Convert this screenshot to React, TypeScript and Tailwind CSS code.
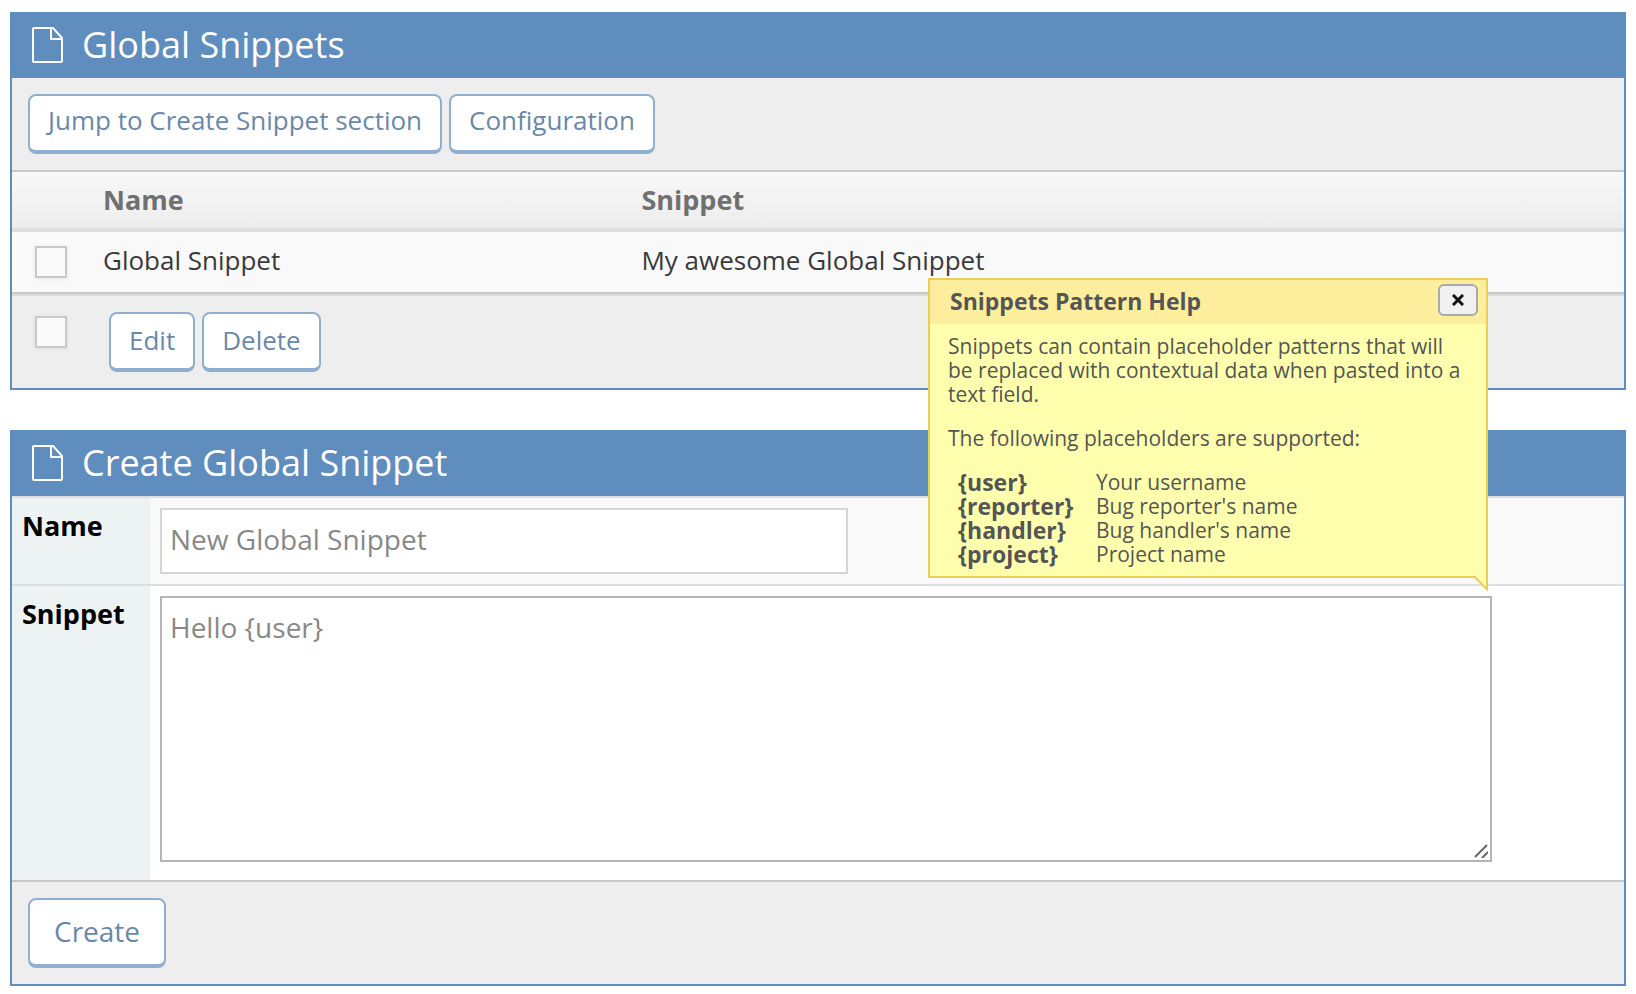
import { useState } from "react";
import type { ReactNode } from "react";

const snippets = [{ name: "Global Snippet", text: "My awesome Global Snippet" }];

const placeholders = [
  { pattern: "{user}", meaning: "Your username" },
  { pattern: "{reporter}", meaning: "Bug reporter's name" },
  { pattern: "{handler}", meaning: "Bug handler's name" },
  { pattern: "{project}", meaning: "Project name" },
];

const buttonBase =
  "rounded-lg border-2 border-b-4 border-[#8fafcf] bg-white text-[#6a88a8] whitespace-nowrap hover:bg-[#f4f8fb]";
const linkButton = `${buttonBase} block px-[18px] pt-2 pb-[14px] text-[26px] leading-8`;
const actionButton = `${buttonBase} block px-[18px] pt-[10px] pb-3 text-[26px] leading-8`;
const fieldLabel =
  "w-[138px] shrink-0 bg-[#edf3f3] px-[10px] pt-[10px] text-[27px] leading-9 font-bold text-black";

function FileIcon() {
  return (
    <svg width="32" height="38" viewBox="0 0 32 38" fill="none" stroke="currentColor" strokeWidth="2" strokeLinejoin="round" aria-hidden="true">
      <path d="M3 2H22L31 12V35Q31 36 30 36H3Q2 36 2 35V3Q2 2 3 2Z" />
      <path d="M20 2V13H31" />
    </svg>
  );
}

function Panel({ title, children }: { title: string; children: ReactNode }) {
  return (
    <section className="border-2 border-[#5f8dbd]">
      <h4 className="flex h-16 items-center gap-[19px] bg-[#5f8dbd] px-[19px] pb-0.5 text-[36px] leading-[48px] text-white">
        <FileIcon />
        <span>{title}</span>
      </h4>
      {children}
    </section>
  );
}

function Checkbox({ label }: { label: string }) {
  return (
    <input
      type="checkbox"
      aria-label={label}
      className="block size-8 appearance-none border-2 border-[#c8c8c8] bg-[#fafafa] shadow-[0_1px_4px_rgba(0,0,0,0.08)] checked:bg-[#8fafcf]"
    />
  );
}

function PatternHelp({ onClose }: { onClose: () => void }) {
  return (
    <div
      role="dialog"
      aria-label="Snippets Pattern Help"
      className="absolute right-1 bottom-full mb-[18px] w-[560px] border-2 border-[#ebcf55] bg-[#ffffae] text-[21px] leading-6 text-[#555]"
    >
      <div className="flex h-11 items-center justify-between bg-[#fdee9e] pr-2 pb-0.5 pl-5">
        <h5 className="text-[23px] font-bold">Snippets Pattern Help</h5>
        <button
          type="button"
          aria-label="Close"
          onClick={onClose}
          className="mb-0.5 flex h-8 w-10 items-center justify-center rounded-md border-2 border-[#a9a9a9] bg-[#f0f0f0] text-[#111]"
        >
          <svg width="12" height="12" viewBox="0 0 12 12" stroke="currentColor" strokeWidth="3" aria-hidden="true">
            <path d="M1 1L11 11M11 1L1 11" />
          </svg>
        </button>
      </div>
      <div className="px-[18px] py-[10px]">
        <p>Snippets can contain placeholder patterns that will be replaced with contextual data when pasted into a text field.</p>
        <p className="mt-5">The following placeholders are supported:</p>
        <table className="mt-5 ml-[10px]">
          <tbody>
            {placeholders.map((p) => (
              <tr key={p.pattern}>
                <th scope="row" className="w-[138px] p-0 text-left text-[23px] leading-6 font-bold">{p.pattern}</th>
                <td className="p-0">{p.meaning}</td>
              </tr>
            ))}
          </tbody>
        </table>
      </div>
      <svg width="16" height="15" viewBox="0 0 16 15" className="absolute top-full -right-0.5" aria-hidden="true">
        <path d="M2 0H16V15Z" fill="#ffffae" />
        <path d="M1 -1L15 13.5V0" fill="none" stroke="#ebcf55" strokeWidth="2" />
      </svg>
    </div>
  );
}

export default function App() {
  const [helpOpen, setHelpOpen] = useState(true);

  return (
    <main className="flex flex-col gap-10 bg-white px-[10px] pt-3 pb-2 font-['Open_Sans',sans-serif]">
      <Panel title="Global Snippets">
        <div className="flex gap-[7px] border-b-2 border-[#c9c9c9] bg-[#eee] p-4">
          <a href="#create" className={linkButton}>Jump to Create Snippet section</a>
          <a href="#configuration" className={linkButton}>Configuration</a>
        </div>
        <table className="w-full table-fixed border-separate border-spacing-0 text-left text-[26px] leading-9">
          <thead className="text-[27px]">
            <tr className="bg-linear-to-b from-[#f8f8f8] to-[#ececec] text-[#707070]">
              <th className="h-15 w-[75px] border-b-4 border-[#ddd] p-0" aria-label="Select" />
              <th className="h-15 w-[33.4%] border-b-4 border-[#ddd] px-4 py-0 font-bold">Name</th>
              <th className="h-15 border-b-4 border-[#ddd] px-4 py-0 font-bold">Snippet</th>
            </tr>
          </thead>
          <tbody>
            {snippets.map((s) => (
              <tr key={s.name} className="bg-[#f9f9f9] text-[#393939]">
                <td className="h-15 py-0 pl-[23px]"><Checkbox label={`Select ${s.name}`} /></td>
                <td className="h-15 px-4 pt-0 pb-1">{s.name}</td>
                <td className="h-15 px-4 pt-0 pb-1">{s.text}</td>
              </tr>
            ))}
          </tbody>
        </table>
        <div className="h-0.5 bg-[#c9c9c9]" />
        <div className="flex border-t-2 border-[#ddd] bg-[#eee] py-4 pl-[23px]">
          <div className="w-[74px] pt-1"><Checkbox label="Select all snippets" /></div>
          <div className="flex gap-[7px]">
            <button type="button" className={actionButton}>Edit</button>
            <button type="button" className={actionButton}>Delete</button>
          </div>
        </div>
      </Panel>

      <Panel title="Create Global Snippet">
        <form id="create" onSubmit={(e) => e.preventDefault()}>
          <div className="flex border-t-2 border-[#ddd] bg-[#f9f9f9]">
            <label htmlFor="name" className={fieldLabel}>Name</label>
            <div className="grow p-[10px]">
              <input
                id="name"
                type="text"
                placeholder="New Global Snippet"
                className="block h-[66px] w-full max-w-[688px] border-2 border-[#d5d5d5] bg-white px-2 pb-1 text-[28px] text-[#696969] placeholder:text-[#888]"
              />
            </div>
          </div>
          <div className="flex border-t-2 border-[#ddd] bg-white">
            <label htmlFor="snippet" className={fieldLabel}>Snippet</label>
            <div className="grow px-[10px] pt-[10px] pb-[18px]">
              <div className="relative max-w-[1332px]">
                <textarea
                  id="snippet"
                  placeholder="Hello {user}"
                  className="block h-[266px] w-full resize-none border-2 border-[#b5b5b5] bg-white px-2 py-[9px] text-[28px] leading-10 text-[#696969] placeholder:text-[#888]"
                />
                <svg width="16" height="16" viewBox="0 0 16 16" className="absolute right-1 bottom-1 text-[#666]" stroke="currentColor" strokeWidth="2" aria-hidden="true">
                  <path d="M3 15L15 3M10 16L16 10" />
                </svg>
                {helpOpen && <PatternHelp onClose={() => setHelpOpen(false)} />}
              </div>
            </div>
          </div>
          <div className="border-t-2 border-[#c9c9c9] bg-[#eee] p-4">
            <button type="submit" className={`${buttonBase} block px-6 pt-[13px] pb-[15px] text-[28px] leading-9`}>Create</button>
          </div>
        </form>
      </Panel>
    </main>
  );
}
